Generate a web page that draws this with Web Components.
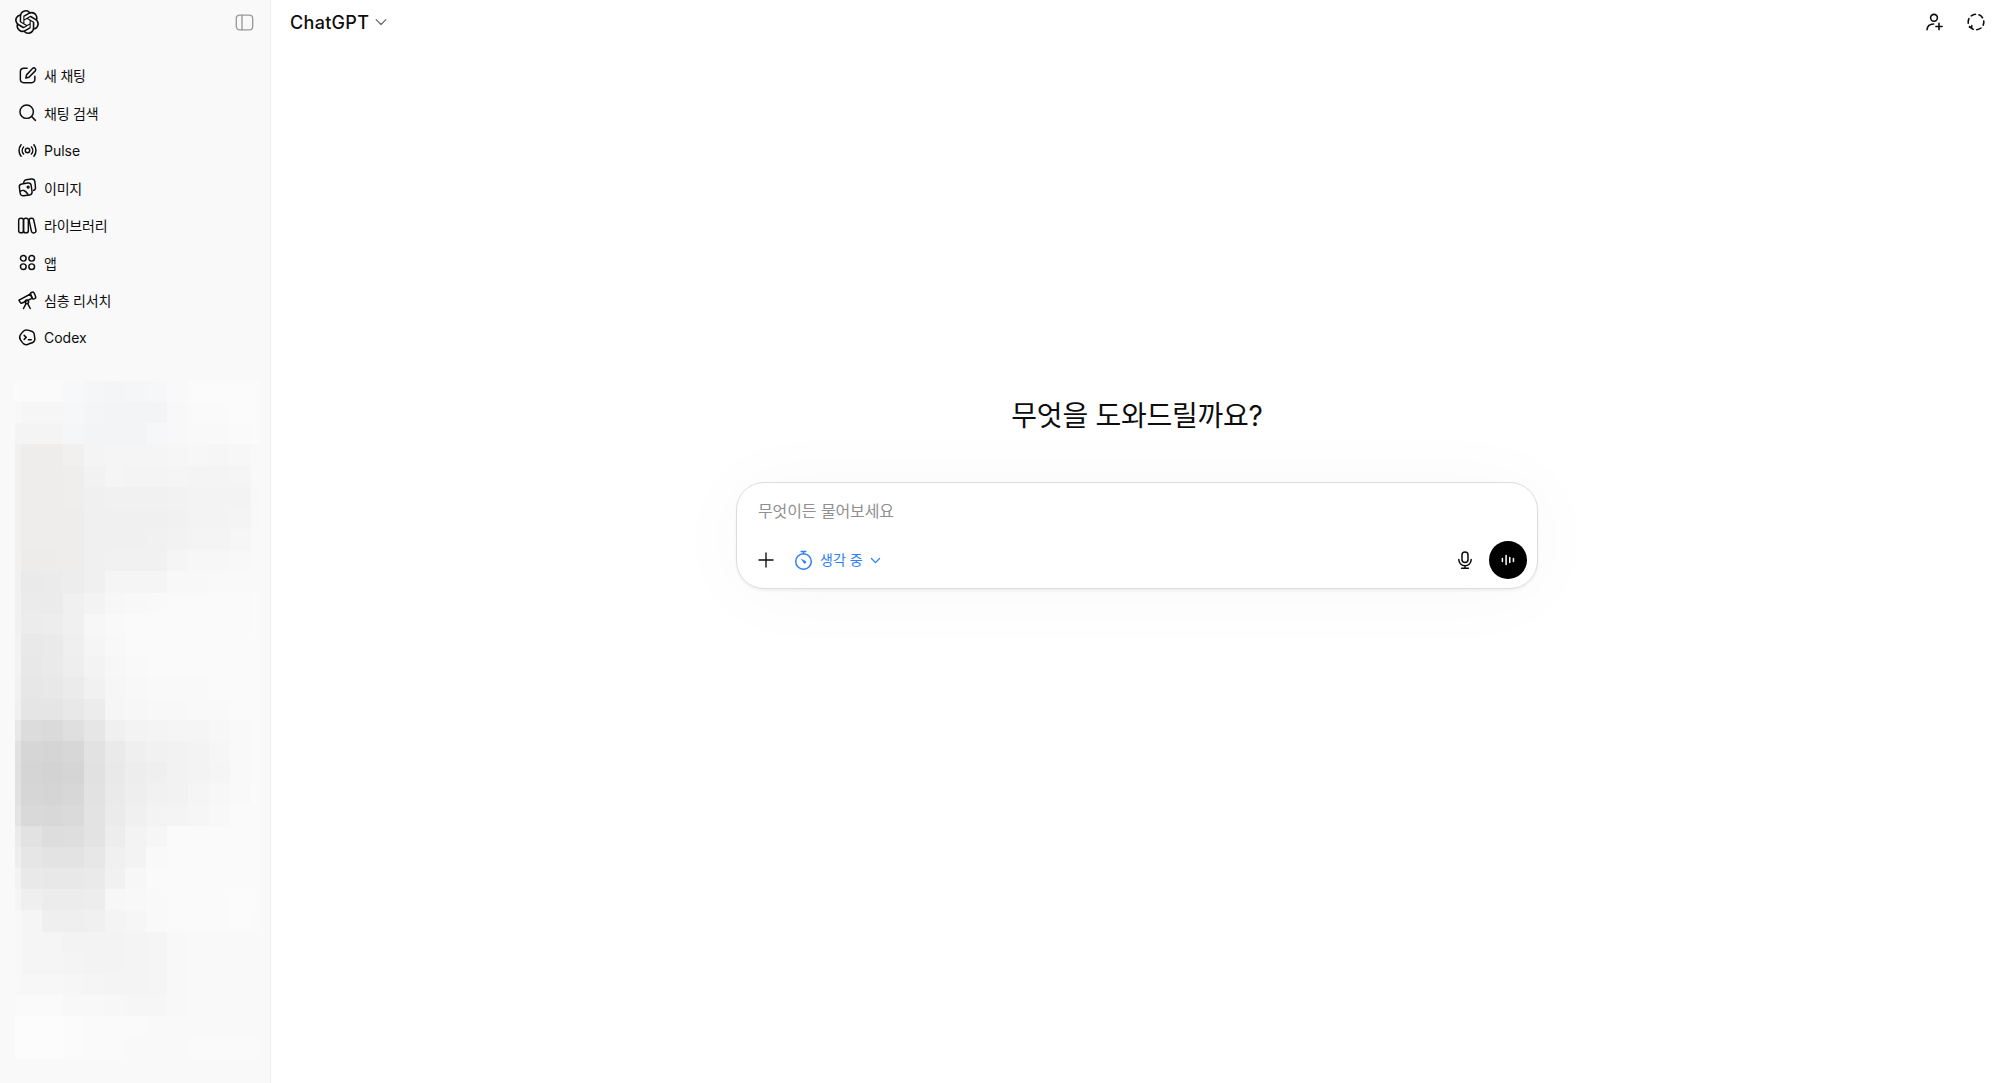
<!DOCTYPE html>
<html lang="ko">
<head>
<meta charset="utf-8">
<title>ChatGPT</title>
<style>
    html, body { margin: 0; height: 100%; background: #fff; }
    body { font-family: Inter, "Noto Sans CJK KR", sans-serif; color: #0d0d0d; overflow: hidden; }
</style>
</head>
<body>
<gpt-app>
    <gpt-sidebar slot="side">
        <nav-item icon="edit" ko>새 채팅</nav-item>
        <nav-item icon="search" ko>채팅 검색</nav-item>
        <nav-item icon="pulse">Pulse</nav-item>
        <nav-item icon="image" ko>이미지</nav-item>
        <nav-item icon="library" ko>라이브러리</nav-item>
        <nav-item icon="apps" ko>앱</nav-item>
        <nav-item icon="telescope" ko>심층 리서치</nav-item>
        <nav-item icon="codex">Codex</nav-item>
    </gpt-sidebar>
    <gpt-header slot="top">ChatGPT</gpt-header>
    <gpt-composer slot="main" placeholder="무엇이든 물어보세요">무엇을 도와드릴까요?</gpt-composer>
</gpt-app>
<script>
const ICONS = {
    logo: '<path fill="currentColor" stroke="none" d="M22.282 9.821a5.985 5.985 0 0 0-.516-4.91 6.046 6.046 0 0 0-6.51-2.9A6.065 6.065 0 0 0 4.981 4.18a5.985 5.985 0 0 0-3.998 2.9 6.046 6.046 0 0 0 .743 7.097 5.98 5.98 0 0 0 .51 4.911 6.051 6.051 0 0 0 6.515 2.9A5.985 5.985 0 0 0 13.26 24a6.056 6.056 0 0 0 5.772-4.206 5.99 5.99 0 0 0 3.997-2.9 6.056 6.056 0 0 0-.747-7.073zM13.26 22.43a4.476 4.476 0 0 1-2.876-1.04l.141-.081 4.779-2.758a.795.795 0 0 0 .392-.681v-6.737l2.02 1.168a.071.071 0 0 1 .038.052v5.583a4.504 4.504 0 0 1-4.494 4.494zM3.6 18.304a4.47 4.47 0 0 1-.535-3.014l.142.085 4.783 2.759a.771.771 0 0 0 .78 0l5.843-3.369v2.332a.08.08 0 0 1-.033.062L9.74 19.95a4.5 4.5 0 0 1-6.14-1.646zM2.34 7.896a4.485 4.485 0 0 1 2.366-1.973V11.6a.766.766 0 0 0 .388.676l5.815 3.355-2.02 1.168a.076.076 0 0 1-.071 0l-4.83-2.786A4.504 4.504 0 0 1 2.34 7.872zm16.597 3.855l-5.833-3.387L15.119 7.2a.076.076 0 0 1 .071 0l4.83 2.791a4.494 4.494 0 0 1-.676 8.105v-5.678a.79.79 0 0 0-.407-.667zm2.01-3.023l-.141-.085-4.774-2.782a.776.776 0 0 0-.785 0L9.409 9.23V6.897a.066.066 0 0 1 .028-.061l4.83-2.787a4.5 4.5 0 0 1 6.68 4.66zm-12.64 4.135l-2.02-1.164a.08.08 0 0 1-.038-.057V6.075a4.5 4.5 0 0 1 7.375-3.453l-.142.08L8.704 5.46a.795.795 0 0 0-.393.681zm1.097-2.365l2.602-1.5 2.607 1.5v2.999l-2.597 1.5-2.607-1.5z"/>',
    toggle: '<rect x="2.2" y="3" width="15.6" height="14" rx="3.2"/><path d="M7.6 3v14"/>',
    edit: '<path d="M9.6 3H6.4A3.2 3.2 0 0 0 3.2 6.2v7.4a3.2 3.2 0 0 0 3.2 3.2h7.4a3.2 3.2 0 0 0 3.2-3.2v-3"/><path d="M15 3.2a1.7 1.7 0 0 1 2.4 2.4l-6 6.1-3 .7.7-3z"/>',
    search: '<circle cx="9.2" cy="9.2" r="6.4"/><path d="M13.9 13.9l3.6 3.6"/>',
    pulse: '<circle cx="10" cy="10" r="2.1"/><path d="M6.3 6.6a5 5 0 0 0 0 6.8M13.7 6.6a5 5 0 0 1 0 6.8"/><path d="M3.9 4.6a8.4 8.4 0 0 0 0 10.8M16.1 4.6a8.4 8.4 0 0 1 0 10.8"/>',
    image: '<rect x="2.6" y="6.2" width="11.4" height="11.4" rx="2.8" transform="rotate(-8 8 12)"/><path d="M6.4 5.4l.3-1.2a2.6 2.6 0 0 1 2-1.6l5-.6a3 3 0 0 1 3.3 2.6l.6 5a3 3 0 0 1-1.8 3.2"/><circle cx="10.6" cy="9.6" r=".9"/><path d="M3.2 13.6c2.2-1.6 4.4-1.2 7.2 2.8"/>',
    library: '<rect x="1.6" y="3" width="4.6" height="14" rx="2.1"/><rect x="6.2" y="3" width="4.6" height="14" rx="2.1"/><rect x="12.6" y="3" width="4.4" height="14.2" rx="2.1" transform="rotate(-12 14.8 10)"/>',
    apps: '<circle cx="6" cy="6" r="2.7"/><circle cx="14" cy="6" r="2.7"/><circle cx="6" cy="14" r="2.7"/><circle cx="14" cy="14" r="2.7"/>',
    telescope: '<path d="M2.4 9.4l10.4-5.6 1.9 4-9.8 4.6a1.4 1.4 0 0 1-1.8-.6l-1.2-1.9a.4.4 0 0 1 .5-.5z"/><rect x="13.4" y="2" width="3.8" height="6.6" rx="1.6" transform="rotate(-22 15.3 5.3)"/><circle cx="9.4" cy="11.2" r="1.7"/><path d="M8.6 13l-2.4 4.6M10.2 13l2.4 4.6"/>',
    codex: '<path d="M7.2 3.2c1.8-.8 3.2-.2 4.6.2 1.6.4 3.4.6 4.2 2.2.8 1.5.4 2.8.8 4.2.4 1.6.2 3.4-1.2 4.6-1.4 1.2-3 1-4.4 1.8-1.6.8-3.4.8-4.8-.2-1.4-1-2-2.4-3-3.6-1-1.4-1.2-3.2-.2-4.8 1-1.6 2.4-3.6 4-4.4z"/><path d="M6.8 8l2 1.9-2 1.9M10.8 12.2h2.8"/>',
    plus: '<path d="M10 2.2v15.6M2.2 10h15.6"/>',
    timer: '<circle cx="10" cy="11" r="7.4"/><path d="M7.8 1.4h4.4M10 1.4v2.2"/><path fill="currentColor" stroke="none" d="M7.2 8.2l4.6 2.2a1.3 1.3 0 1 1-1.7 1.8z"/>',
    chevron: '<path d="M4.6 7.4l5.4 5.4 5.4-5.4"/>',
    mic: '<rect x="7" y="2" width="6" height="10.4" rx="3"/><path d="M3.8 9.6a6.2 6.2 0 0 0 12.4 0M10 15.8v2.4M6.6 18.2h6.8"/>',
    wave: '<path d="M3 8.2v3.6M7.6 4.4v11.2M12.2 6.8v6.4M16.8 8v4"/>',
    adduser: '<circle cx="10" cy="5.8" r="3.4"/><path d="M3 17.6c.5-3.8 3-5.6 6.6-5.6"/><path d="M15 11.4v6.2M11.9 14.5h6.2"/>',
    dashed: '<circle cx="10" cy="10" r="7.8" stroke-dasharray="4.6 3.6" stroke-dashoffset="1.4"/><path d="M3.4 15.4h2.4v-2" stroke-width="1.4"/>'
};

class GptIcon extends HTMLElement {
    connectedCallback() {
        const size = this.getAttribute('size') || 20;
        const name = this.getAttribute('name');
        const box = name === 'logo' ? '0 0 24 24' : '0 0 20 20';
        this.attachShadow({ mode: 'open' }).innerHTML = `
            <style>
                :host { display: inline-flex; flex: none; width: ${size}px; height: ${size}px; }
                svg { width: 100%; height: 100%; fill: none; stroke: currentColor;
                      stroke-width: ${this.getAttribute('weight') || 1.45}; stroke-linecap: round; stroke-linejoin: round; }
            </style>
            <svg viewBox="${box}">${ICONS[name]}</svg>`;
    }
}
customElements.define('gpt-icon', GptIcon);

class GptApp extends HTMLElement {
    constructor() {
        super();
        this.attachShadow({ mode: 'open' }).innerHTML = `
            <style>
                :host { display: flex; height: 1083px; width: 2000px; overflow: hidden; }
                .col { flex: 1; display: flex; flex-direction: column; min-width: 0; }
            </style>
            <slot name="side"></slot>
            <div class="col">
                <slot name="top"></slot>
                <slot name="main"></slot>
            </div>`;
    }
}
customElements.define('gpt-app', GptApp);

class GptSidebar extends HTMLElement {
    constructor() {
        super();
        this.attachShadow({ mode: 'open' }).innerHTML = `
            <style>
                :host { display: flex; flex-direction: column; flex: none; box-sizing: border-box;
                        width: 271px; height: 1083px; background: #f9f9f9; border-right: 1px solid #ededed; overflow: hidden; }
                .top { display: flex; align-items: center; justify-content: space-between;
                       height: 44px; padding: 0 15px 0 15px; flex: none; }
                .toggle { color: #9b9b9b; margin-top: 1px; display: flex; }
                nav { display: flex; flex-direction: column; padding-top: 12.5px; flex: none; }
            </style>
            <div class="top">
                <gpt-icon name="logo" size="24"></gpt-icon>
                <span class="toggle"><gpt-icon name="toggle" size="21" weight="1.3"></gpt-icon></span>
            </div>
            <nav><slot></slot></nav>
            <blur-history></blur-history>`;
    }
}
customElements.define('gpt-sidebar', GptSidebar);

class NavItem extends HTMLElement {
    connectedCallback() {
        this.attachShadow({ mode: 'open' }).innerHTML = `
            <style>
                :host { display: flex; align-items: center; gap: 6.5px; height: 37.5px; padding-left: 16.5px;
                        font-size: 14px; color: #0d0d0d; }
                :host([ko]) { letter-spacing: -.2px; }
            </style>
            <gpt-icon name="${this.getAttribute('icon')}" size="21" weight="1.4"></gpt-icon>
            <slot></slot>`;
    }
}
customElements.define('nav-item', NavItem);

// pixelated conversation list, one row of grey levels per 21px block
const BLUR_ROWS = [
    'fb fa fa f7 f5 f4 f5 f6 f9 fb fb fb fb',
    'f8 f6 f6 f6 f4 f3 f3 f3 f8 fa fa fb fb',
    'f4 f4 f4 f5 f3 f3 f3 f6 f8 f9 f9 fa fb',
    'f1 ee ee f1 f4 f5 f5 f5 f6 f7 f6 f7 f9',
    'f1 ee ee ef f2 f5 f4 f4 f5 f4 f4 f5 f9',
    'f1 ee ee ef f0 f1 f1 f1 f2 f3 f3 f3 f8',
    'f1 ee ee ee f0 f0 f0 f0 f1 f3 f3 f4 f8',
    'f1 ee ee ee f0 f0 f0 f1 f2 f4 f4 f6 f9',
    'f1 ed ed ee f0 f1 f1 f1 f5 f7 f7 f8 f9',
    'f1 ea eb ed f0 f5 f5 f5 f8 f8 f9 f9 f9',
    'f1 eb eb f0 f3 f7 f8 f9 fa fa fa fa fb',
    'f1 ec ed f0 f7 f9 fa fa fa fa fa fa fb',
    'f3 e9 ea ef f5 f8 fa fa fa fa fa fa fa',
    'f3 e8 ea ee f3 f7 f9 fa fa fa fa fa fa',
    'f1 e7 e8 eb f1 f6 f8 f9 f9 f9 fa fa fa',
    'f0 e5 e5 e8 ec f6 f7 f8 f8 f9 f9 fa fa',
    'e8 dc da df e6 f0 f3 f4 f5 f5 f7 f9 fa',
    'e1 d6 d5 d7 e2 ea ef f1 f2 f3 f6 f9 fa',
    'e0 d5 d3 d5 e1 e9 ed ef f2 f3 f5 f9 fa',
    'e1 d6 d5 d7 e2 ea ee f1 f2 f5 f7 f9 fb',
    'e4 d9 d8 da e3 eb f0 f3 f4 f6 f8 fa fa',
    'eb e2 dd de e3 ed f3 f6 fa fa fa fa fa',
    'ee e6 e3 e3 e7 f0 f3 f9 fa fa fa fa fa',
    'f3 e9 e8 e8 ea f1 f7 fa fa fa fa fa fa',
    'f5 ef ec ec ed f7 f8 f9 fa fa fa fb fb',
    'f8 f5 ef ef f0 f4 f6 f9 fa fa fa fb fa',
    'f8 f5 f5 f3 f3 f3 f4 f5 f8 f9 f9 f9 f9',
    'f8 f5 f5 f4 f3 f3 f4 f5 f8 f9 f9 f9 f9',
    'f8 f7 f7 f6 f5 f4 f4 f5 f8 f9 f9 f9 f9',
    'fa fa fa f8 f8 f7 f6 f6 f8 f9 f9 f9 f9',
    'fc fc fc fb fa fa fa f9 f9 f9 f9 f9 f9',
    'fc fc fc fb fa fa f9 f9 f9 fa fa fa fa'
];

class BlurHistory extends HTMLElement {
    connectedCallback() {
        let cells = '';
        BLUR_ROWS.forEach((row, r) => {
            row.split(' ').forEach((hex, c) => {
                const v = parseInt(hex, 16);
                let tint = [0, 0, 0];
                if (r < 3 && c >= 3 && c <= 7) tint = [-1, 1, 2];
                if (r >= 3 && r <= 8 && c >= 1 && c <= 3) tint = [0, -1, -3];
                cells += `<i style="background:rgb(${v + tint[0]},${v + tint[1]},${v + tint[2]})"></i>`;
            });
        });
        this.attachShadow({ mode: 'open' }).innerHTML = `
            <style>
                :host { display: block; flex: none; margin: 24.25px 0 0 15px; width: 245px; }
                .grid { display: grid; grid-template-columns: 6px repeat(11, 20.9px) 9px;
                        grid-auto-rows: 21.2px; filter: blur(.4px); }
            </style>
            <div class="grid">${cells}</div>`;
    }
}
customElements.define('blur-history', BlurHistory);

class GptHeader extends HTMLElement {
    constructor() {
        super();
        this.attachShadow({ mode: 'open' }).innerHTML = `
            <style>
                :host { display: flex; align-items: center; justify-content: space-between; flex: none;
                        height: 44px; padding: 0 14px 0 19px; }
                .title { display: flex; align-items: center; gap: 3px; font-size: 18px; font-weight: 500; letter-spacing: .3px; }
                .chev { color: #666; display: flex; }
                .actions { display: flex; align-items: center; gap: 22px; }
            </style>
            <div class="title"><span><slot></slot></span><span class="chev"><gpt-icon name="chevron" size="18" weight="1.3"></gpt-icon></span></div>
            <div class="actions">
                <gpt-icon name="adduser" size="20" weight="1.6"></gpt-icon>
                <gpt-icon name="dashed" size="20" weight="1.6"></gpt-icon>
            </div>`;
    }
}
customElements.define('gpt-header', GptHeader);

class GptComposer extends HTMLElement {
    connectedCallback() {
        this.attachShadow({ mode: 'open' }).innerHTML = `
            <style>
                :host { display: flex; flex-direction: column; align-items: center; padding: 352px 0 0 3px; }
                h1 { margin: 0 0 46px; font-size: 28px; font-weight: 400; line-height: 40px; letter-spacing: -.25px; }
                .box { box-sizing: border-box; width: 802px; height: 107px; background: #fff; border-radius: 28px;
                       border: 1px solid #dcdcdc; display: flex; flex-direction: column; padding: 0 10px 9px 20px;
                       box-shadow: 0 2px 3px rgba(0,0,0,.05), 0 4px 80px rgba(0,0,0,.03); }
                .ph { flex: 1; font-size: 16px; color: #8f8f8f; line-height: 24px; padding: 16px 0 0 1px; letter-spacing: -.1px; }
                .tools { display: flex; align-items: center; height: 38px; }
                .mode { display: flex; align-items: center; gap: 6px; margin-left: 18px; color: #2f7ff5; font-size: 14px; }
                .mode span:first-of-type { margin-top: -2px; }
                .mode .chev { margin-left: -1px; display: flex; }
                .grow { flex: 1; }
                .mic { margin-right: 14px; display: flex; }
                .send { width: 38px; height: 38px; border-radius: 50%; background: #000; color: #fff;
                        display: flex; align-items: center; justify-content: center; }
            </style>
            <h1><slot></slot></h1>
            <div class="box">
                <div class="ph">${this.getAttribute('placeholder')}</div>
                <div class="tools">
                    <gpt-icon name="plus" size="18" weight="1.5"></gpt-icon>
                    <div class="mode">
                        <gpt-icon name="timer" size="21"></gpt-icon>
                        <span>생각 중</span>
                        <span class="chev"><gpt-icon name="chevron" size="15" weight="1.7"></gpt-icon></span>
                    </div>
                    <div class="grow"></div>
                    <span class="mic"><gpt-icon name="mic" size="20" weight="1.5"></gpt-icon></span>
                    <div class="send"><gpt-icon name="wave" size="16" weight="1.9"></gpt-icon></div>
                </div>
            </div>`;
    }
}
customElements.define('gpt-composer', GptComposer);
</script>
</body>
</html>
